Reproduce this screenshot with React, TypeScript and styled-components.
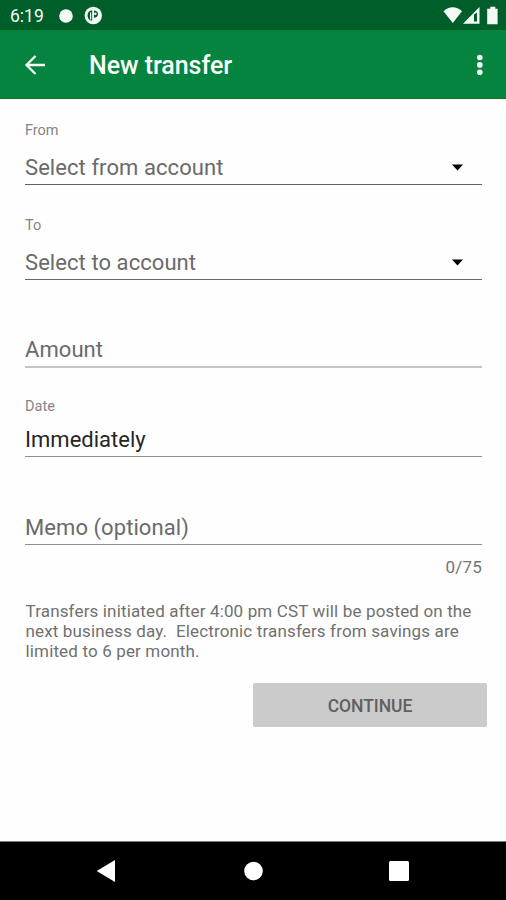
import React from "react";
import styled, { createGlobalStyle } from "styled-components";

const GlobalStyle = createGlobalStyle`
  * { box-sizing: border-box; }
  body { margin: 0; background: #fefefe; font-family: Roboto, "Liberation Sans", sans-serif; }
`;

const Screen = styled.div`
  width: 506px;
  height: 900px;
  display: flex;
  flex-direction: column;
  background: #fefefe;
  overflow: hidden;
`;

const StatusBar = styled.div`
  height: 30px;
  flex: none;
  display: flex;
  align-items: center;
  justify-content: space-between;
  padding: 1px 7px 0 10px;
  background: #005e2b;
  color: #f4fbf5;
`;

const StatusGroup = styled.div`
  display: flex;
  align-items: center;
`;

const Clock = styled.span`
  width: 48px;
  font-size: 17.5px;
  line-height: 20px;
`;

const AppBar = styled.header`
  height: 69px;
  flex: none;
  display: flex;
  align-items: center;
  padding: 1px 14px 0 23px;
  background: #04843f;
  border-bottom: 1px solid #10701f;
`;

const Title = styled.h1`
  margin: 0 auto 0 42px;
  padding-top: 2px;
  font-size: 25px;
  font-weight: 500;
  line-height: 30px;
  letter-spacing: -0.05px;
  color: #fbfffb;
`;

const IconButton = styled.button`
  display: flex;
  padding: 0;
  border: 0;
  background: none;
  color: #f8fff9;
`;

const Form = styled.main`
  flex: 1;
  display: flex;
  flex-direction: column;
  padding: 0 24px 0 25px;
`;

const Field = styled.div<{ $height: number; $line: string; $thickness?: number }>`
  height: ${(p) => p.$height}px;
  flex: none;
  display: flex;
  flex-direction: column;
  justify-content: flex-end;
  border-bottom: ${(p) => p.$thickness ?? 1}px solid ${(p) => p.$line};
`;

const Label = styled.label<{ $gap: number }>`
  margin-bottom: ${(p) => p.$gap}px;
  font-size: 14.5px;
  line-height: 18px;
  color: #848484;
`;

const Value = styled.div<{ $filled?: boolean }>`
  display: flex;
  align-items: center;
  justify-content: space-between;
  height: 26px;
  margin-bottom: 3px;
  padding-right: 18px;
  font-size: 22px;
  line-height: 26px;
  letter-spacing: ${(p) => (p.$filled ? 0.02 : 0.07)}px;
  color: ${(p) => (p.$filled ? "#262626" : "#6a6a6a")};
`;

const Caret = styled.svg`
  margin-bottom: 2px;
`;

const Counter = styled.div`
  margin-top: 12px;
  text-align: right;
  font-size: 17px;
  line-height: 20px;
  letter-spacing: 0.2px;
  color: #747474;
`;

const Notice = styled.p`
  margin: 24px 0 0 0.5px;
  font-size: 17px;
  line-height: 20.2px;
  letter-spacing: 0.15px;
  white-space: pre;
  color: #707070;
`;

const Continue = styled.button`
  align-self: flex-end;
  width: 234px;
  height: 44px;
  margin: 21px -5px 0 0;
  padding: 2px 0 0;
  border: 0;
  border-radius: 2px;
  background: #cbcbcb;
  color: #606060;
  font: 500 17.5px/20px Roboto, sans-serif;
  letter-spacing: -0.05px;
`;

const NavBar = styled.nav`
  height: 59px;
  flex: none;
  display: flex;
  align-items: center;
  gap: 126.5px;
  padding-left: 96px;
  background: #000;
  border-top: 1px solid #777;
  color: #fff;
`;

const selects = [
  { label: "From", value: "Select from account", height: 86, line: "#606060" },
  { label: "To", value: "Select to account", height: 95, line: "#686868" },
];

export default function App() {
  return (
    <Screen>
      <GlobalStyle />
      <StatusBar>
        <StatusGroup>
          <Clock>6:19</Clock>
          <svg width="46" height="20" viewBox="0 0 46 20" fill="currentColor">
            <circle cx="8" cy="10" r="6.8" />
            <circle cx="35.3" cy="9.5" r="8.7" />
            <path d="M32.8 4.5c-4.2 1.2-4.4 8.6 0 10h1.4v-10zM36 4.5v7.3c5.2 0 5.6-7.3 0-7.3z" fill="#005e2b" />
            <path d="M32 6.5h1.2v7H32z" />
            <circle cx="37.3" cy="7.8" r="1.3" />
          </svg>
        </StatusGroup>
        <svg width="56" height="20" viewBox="0 0 56 20" fill="currentColor">
          <path d="M.5 5.2C6-.1 13.5-.1 19 5.2L9.8 17z" />
          <path fillRule="evenodd" d="M20 17.8 36.5 1v16.8zM31 8.5v7h3v-9z" />
          <path d="M47.3.8h5v2h2.3v15.4H44.2V2.8h3.1z" />
        </svg>
      </StatusBar>
      <AppBar>
        <IconButton aria-label="Back">
          <svg width="24" height="24" viewBox="0 0 24 24" fill="none" stroke="currentColor" strokeWidth="2.3">
            <path d="M22 12H4M12.5 3 3.5 12l9 9" />
          </svg>
        </IconButton>
        <Title>New transfer</Title>
        <IconButton aria-label="More">
          <svg width="24" height="24" viewBox="0 0 24 24" fill="currentColor">
            <circle cx="11.8" cy="4.5" r="2.8" />
            <circle cx="11.8" cy="11.9" r="2.8" />
            <circle cx="11.8" cy="19.2" r="2.8" />
          </svg>
        </IconButton>
      </AppBar>
      <Form>
        {selects.map((s) => (
          <Field key={s.label} $height={s.height} $line={s.line}>
            <Label $gap={15}>{s.label}</Label>
            <Value>
              {s.value}
              <Caret width="13" height="7" viewBox="0 0 13 7">
                <path d="M1 .5h11L6.5 6.5z" fill="#000" />
              </Caret>
            </Value>
          </Field>
        ))}
        <Field $height={88} $line="#c4c4c4" $thickness={2}>
          <Value>Amount</Value>
        </Field>
        <Field $height={89} $line="#8e8e8e">
          <Label $gap={11}>Date</Label>
          <Value $filled>Immediately</Value>
        </Field>
        <Field $height={88} $line="#8e8e8e">
          <Value>Memo (optional)</Value>
        </Field>
        <Counter>0/75</Counter>
        <Notice>
          {"Transfers initiated after 4:00 pm CST will be posted on the\nnext business day.  Electronic transfers from savings are\nlimited to 6 per month."}
        </Notice>
        <Continue>CONTINUE</Continue>
      </Form>
      <NavBar>
        <svg width="20" height="24" viewBox="0 0 20 24">
          <path d="M19 1v22L.7 12z" fill="currentColor" />
        </svg>
        <svg width="20" height="20" viewBox="0 0 20 20">
          <circle cx="10.5" cy="10" r="9.3" fill="currentColor" />
        </svg>
        <svg width="20" height="20" viewBox="0 0 20 20">
          <rect width="20" height="20" rx="1.5" fill="currentColor" />
        </svg>
      </NavBar>
    </Screen>
  );
}
